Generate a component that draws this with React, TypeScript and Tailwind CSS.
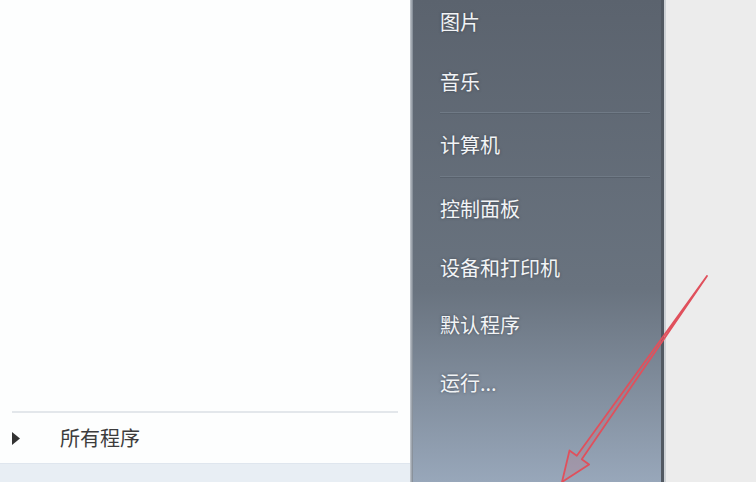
const items = [
  { label: "图片", h: "h-[60px]" },
  { label: "音乐", h: "h-[60px]" },
  { sep: true },
  { label: "计算机", h: "h-[62px]" },
  { sep: true },
  { label: "控制面板", h: "h-[62px]" },
  { label: "设备和打印机", h: "h-[56px]" },
  { label: "默认程序", h: "h-[58px]" },
  { label: "运行...", h: "h-[58px]" },
];

const App: React.FC = () => {
  return (
    <div
      className="relative flex w-[756px] h-[482px] overflow-hidden bg-[#ebebeb]"
      style={{ fontFamily: '"Microsoft YaHei", "Noto Sans CJK SC", sans-serif' }}
    >
      {/* left column */}
      <div className="flex flex-col w-[410px] h-full bg-[#fdfefe]">
        <div className="flex-1" />
        <div className="mx-[12px] h-[2px] bg-[#e3e7eb]" />
        <div className="flex items-center h-[50px]">
          <svg width="8" height="13" viewBox="0 0 8 13" className="ml-[12px]">
            <polygon points="0,0 8,6.5 0,13" fill="#333" />
          </svg>
          <span className="ml-[40px] text-[20px] leading-none text-[#3c3c3c]">
            所有程序
          </span>
        </div>
        <div className="h-[19px] border-t border-[#dfe6ee] bg-[#e8eef4]" />
      </div>

      {/* left frame */}
      <div className="w-[3px] h-full bg-gradient-to-r from-[#c5cad0] to-[#7d8691]" />

      {/* right column */}
      <div className="flex flex-col w-[248px] h-full bg-linear-to-b from-[#5b636e] via-[#69737f] via-60% to-[#98a7ba]">
        <div className="flex flex-col mt-[-8px]">
          {items.map((item, i) =>
            item.sep ? (
              <div
                key={i}
                className="ml-[27px] mr-[11px] h-[2px] border-t border-[#707a86] border-b border-b-[#58616c]"
              />
            ) : (
              <div
                key={i}
                className={`${item.h} flex items-center pl-[27px] text-[20px] leading-none text-[#f2f4f6] [text-shadow:0_0_3px_rgba(40,45,55,0.6)]`}
              >
                {item.label}
              </div>
            )
          )}
        </div>
      </div>

      {/* right frame */}
      <div className="w-[3px] h-full bg-[#525962]" />
      <div className="w-[2px] h-full bg-[#cdd1d5]" />
      <div className="flex-1 h-full bg-[#ececec]" />

      {/* red annotation arrow */}
      <svg
        className="absolute left-0 top-0 pointer-events-none"
        width="756"
        height="482"
        viewBox="0 0 756 482"
      >
        <polygon
          points="707,276 581.8,459.2 589.1,464.5 562,482 569.5,450.5 576.8,455.8"
          fill="rgba(230,90,100,0.15)"
          stroke="#e0505c"
          strokeWidth="1.8"
          strokeLinejoin="round"
        />
      </svg>
    </div>
  );
};

export default App;
